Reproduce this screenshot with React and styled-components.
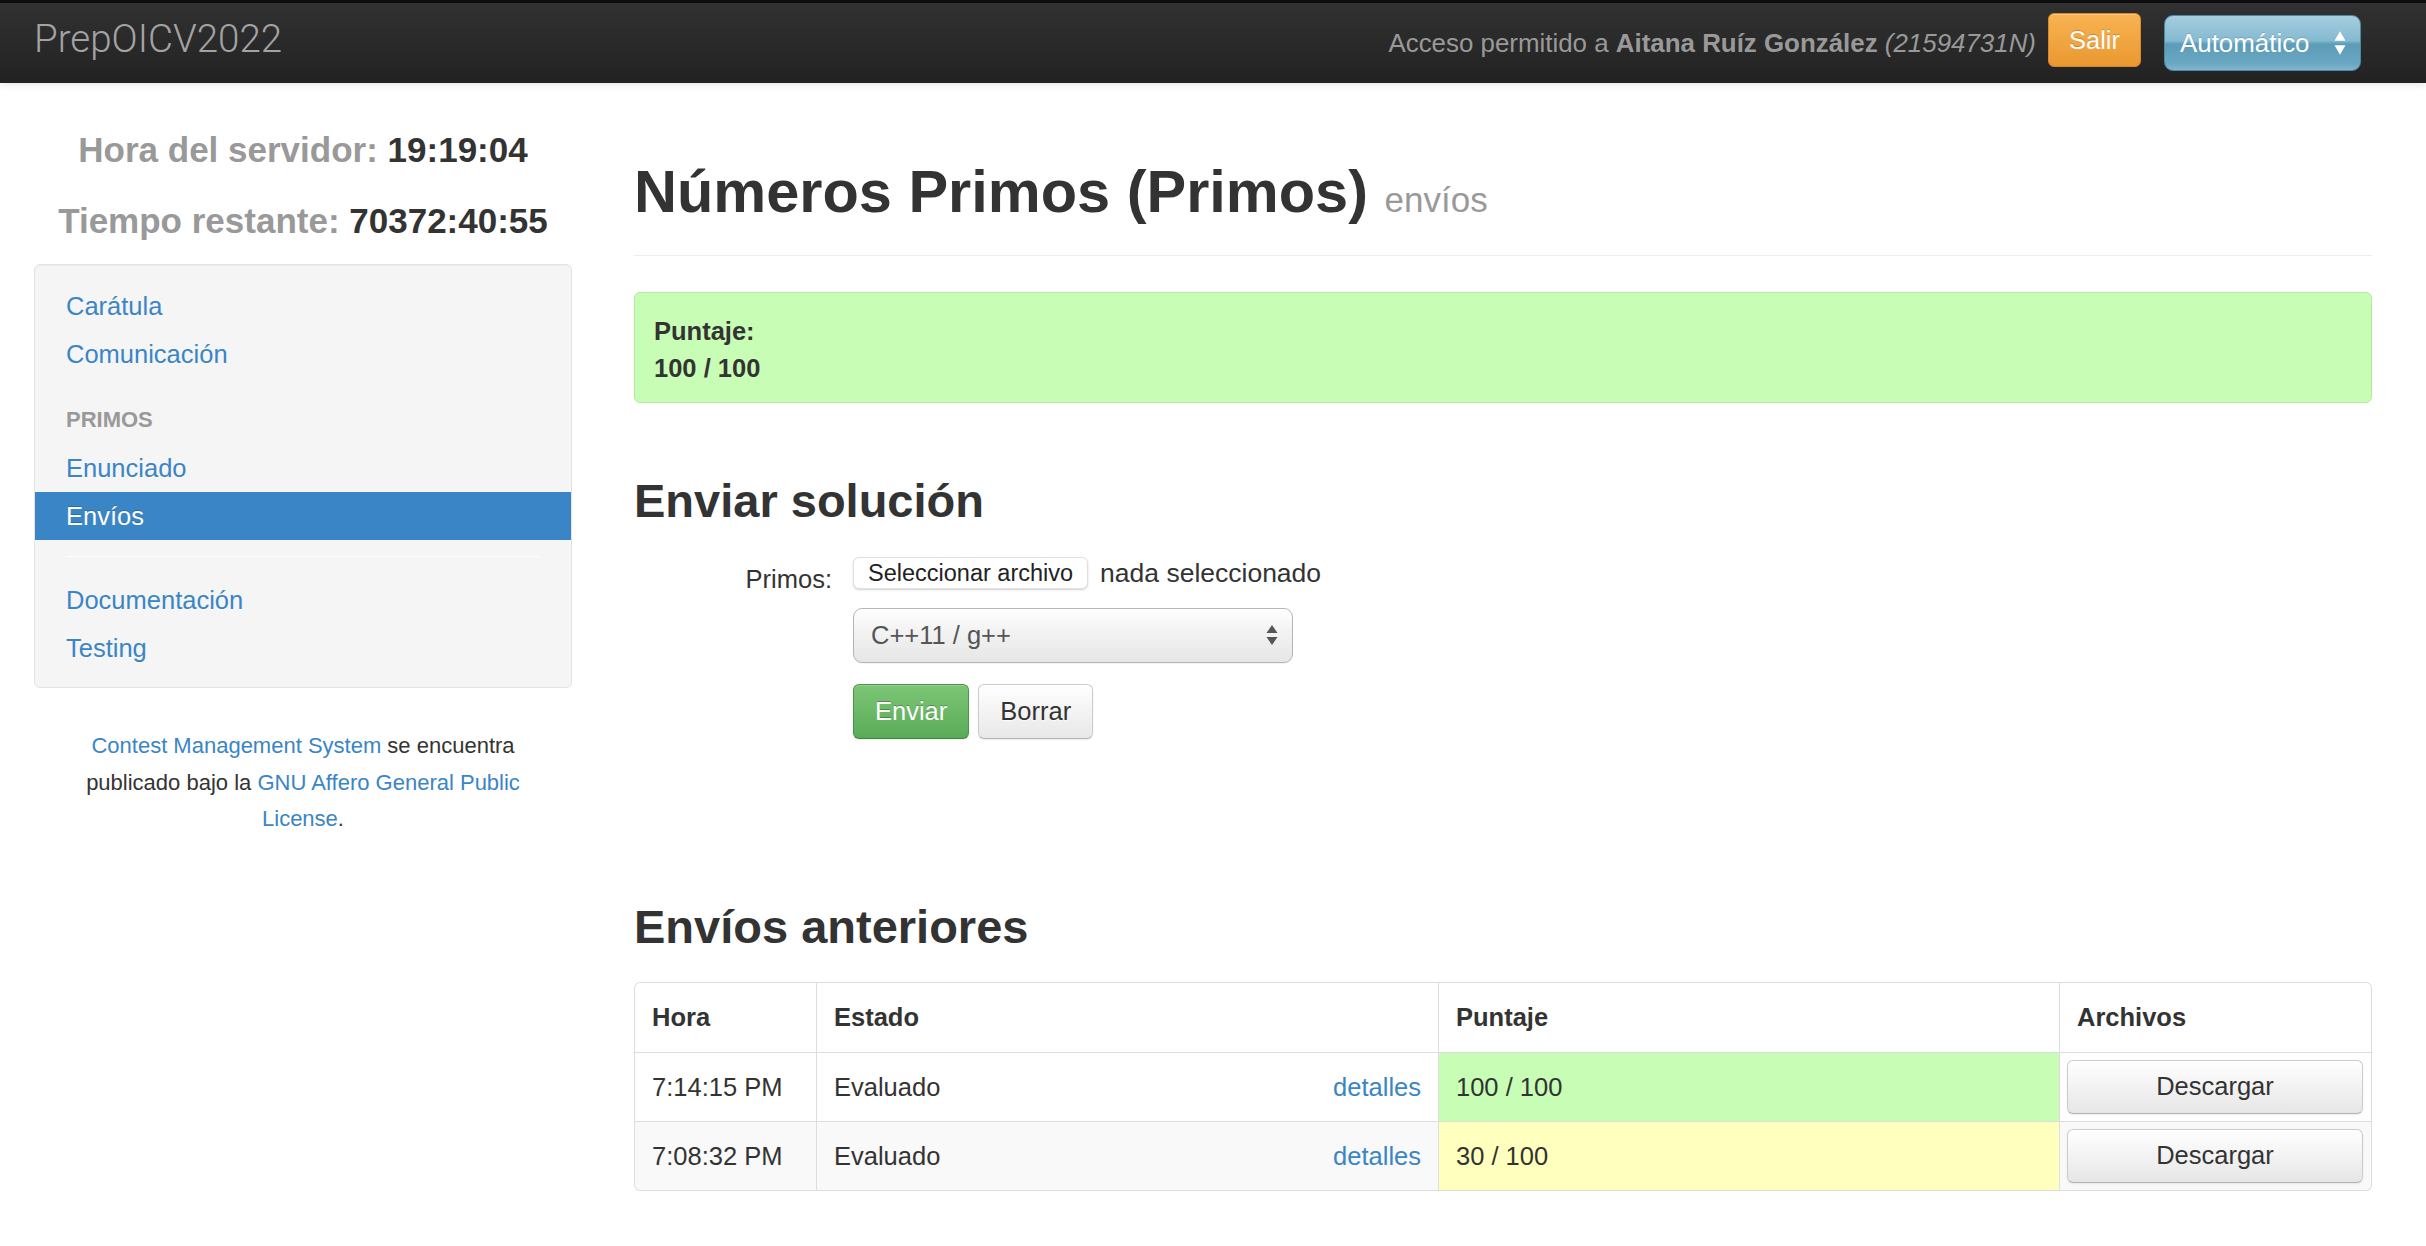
import styled, { createGlobalStyle } from "styled-components";

const GlobalStyle = createGlobalStyle`
    * { box-sizing: border-box; }
    body {
        margin: 0;
        background: #ffffff;
        font-family: "Liberation Sans", Arial, sans-serif;
        font-size: 25.5px;
        line-height: 36.5px;
        color: #333333;
    }
`

const submissions = [
    { time: "7:14:15 PM", status: "Evaluado", score: "100 / 100", full: true },
    { time: "7:08:32 PM", status: "Evaluado", score: "30 / 100", full: false },
];

function UpDown({ color, height = 22 }) {
    return (
        <svg width="12" height={height} viewBox="0 0 12 22" preserveAspectRatio="none">
            <path d="M6 1 L11.5 9 H0.5 Z" fill={color} />
            <path d="M6 21 L11.5 13 H0.5 Z" fill={color} />
        </svg>
    )
}

export default function App() {
    return (
        <>
            <GlobalStyle />
            <Navbar>
                <Brand>PrepOICV2022</Brand>
                <NavRight>
                    <UserText>
                        Acceso permitido a <b>Aitana Ruíz González</b> <i>(21594731N)</i>
                    </UserText>
                    <LogoutButton>Salir</LogoutButton>
                    <LangSelect>
                        Automático
                        <UpDown color="#ffffff" height={26} />
                    </LangSelect>
                </NavRight>
            </Navbar>

            <Page>
                <Sidebar>
                    <ClockLine><span>Hora del servidor:</span> 19:19:04</ClockLine>
                    <ClockLine><span>Tiempo restante:</span> 70372:40:55</ClockLine>
                    <NavBox>
                        <NavLink>Carátula</NavLink>
                        <NavLink>Comunicación</NavLink>
                        <NavHeader>Primos</NavHeader>
                        <NavLink>Enunciado</NavLink>
                        <NavLink $active>Envíos</NavLink>
                        <NavDivider />
                        <NavLink>Documentación</NavLink>
                        <NavLink>Testing</NavLink>
                    </NavBox>
                    <Footer>
                        <A>Contest Management System</A> se encuentra publicado bajo la <A>GNU Affero General Public License</A>.
                    </Footer>
                </Sidebar>

                <Main>
                    <PageHeader>
                        <Title>Números Primos (Primos) <small>envíos</small></Title>
                    </PageHeader>

                    <ScoreAlert>
                        <b>Puntaje:</b>
                        <br />
                        <b>100 / 100</b>
                    </ScoreAlert>

                    <SectionTitle $top={70}>Enviar solución</SectionTitle>
                    <Form>
                        <Label>Primos:</Label>
                        <Controls>
                            <FileRow>
                                <FileButton>Seleccionar archivo</FileButton>
                                <span>nada seleccionado</span>
                            </FileRow>
                            <Select>
                                C++11 / g++
                                <UpDown color="#555555" />
                            </Select>
                            <Actions>
                                <Button $variant="success">Enviar</Button>
                                <Button>Borrar</Button>
                            </Actions>
                        </Controls>
                    </Form>

                    <SectionTitle $top={160}>Envíos anteriores</SectionTitle>
                    <Table>
                        <colgroup>
                            <col style={{ width: "182px" }} />
                            <col style={{ width: "622px" }} />
                            <col style={{ width: "621px" }} />
                            <col />
                        </colgroup>
                        <thead>
                            <tr>
                                <Th>Hora</Th>
                                <Th>Estado</Th>
                                <Th>Puntaje</Th>
                                <Th>Archivos</Th>
                            </tr>
                        </thead>
                        <tbody>
                            {submissions.map((s, i) => (
                                <tr key={i}>
                                    <Td $striped={i % 2 === 1}>{s.time}</Td>
                                    <Td $striped={i % 2 === 1}>
                                        {s.status}
                                        <Details>detalles</Details>
                                    </Td>
                                    <Td $score={s.full ? "full" : "partial"}>{s.score}</Td>
                                    <FileCell $striped={i % 2 === 1}>
                                        <DownloadButton>Descargar</DownloadButton>
                                    </FileCell>
                                </tr>
                            ))}
                        </tbody>
                    </Table>
                </Main>
            </Page>
        </>
    )
}

const Navbar = styled.header`
    height: 83px;
    border-top: 3px solid #0c0c0c;
    background: linear-gradient(#313131, #222222);
    box-shadow: 0 1px 8px rgba(0, 0, 0, 0.12);
    display: flex;
    align-items: center;
    justify-content: space-between;
    padding: 0 65px 4px 34px;
`
const Brand = styled.div`
    font-family: Roboto, "Liberation Sans", sans-serif;
    font-weight: 300;
    font-size: 38.5px;
    line-height: 40px;
    color: #a3a3a3;
    margin-top: -4px;
`
const NavRight = styled.div`
    display: flex;
    align-items: center;
`
const UserText = styled.span`
    color: #999999;
    font-size: 25.9px;
    margin-right: 12px;
    margin-top: 4px;

    b {
        font-weight: bold;
    }
`
const LogoutButton = styled.button`
    height: 54px;
    padding: 0 20px;
    border: 1px solid #d8892a;
    border-radius: 6px;
    background: linear-gradient(#f8b352, #eb9830);
    color: #ffffff;
    font-family: inherit;
    font-size: 25.5px;
    text-shadow: 0 -1px 0 rgba(0, 0, 0, 0.2);
    box-shadow: inset 0 1px 0 rgba(255, 255, 255, 0.25);
    margin-top: -2px;
`
const LangSelect = styled.div`
    width: 197px;
    height: 56px;
    margin-left: 23px;
    margin-top: 4px;
    padding: 0 14px 0 15px;
    display: flex;
    align-items: center;
    justify-content: space-between;
    border: 1px solid #4a8aa6;
    border-radius: 9px;
    background: linear-gradient(#a6cde0 0%, #84bad1 46%, #5c9cb8 52%, #6aa7c2 88%, #82b6cc 100%);
    color: #ffffff;
    font-size: 25.9px;
    text-shadow: 0 -1px 0 rgba(0, 0, 0, 0.15);
`
const Page = styled.div`
    display: flex;
    gap: 62px;
    padding: 0 54px 0 34px;
`
const Sidebar = styled.aside`
    width: 538px;
    flex-shrink: 0;
    padding-top: 31px;
`
const ClockLine = styled.p`
    margin: 0;
    text-align: center;
    font-size: 35px;
    line-height: 71px;
    font-weight: bold;
    color: #333333;

    span {
        color: #999999;
    }
`
const NavBox = styled.nav`
    margin-top: 8px;
    padding: 17px 0 15px;
    background: #f5f5f5;
    border: 1px solid #e3e3e3;
    border-radius: 6px;
    box-shadow: inset 0 1px 1px rgba(0, 0, 0, 0.03);
`
const NavLink = styled.a`
    display: block;
    height: 48px;
    line-height: 48px;
    padding: 0 31px;
    font-size: 25.5px;
    color: ${p => p.$active ? "#ffffff" : "#3a85c6"};
    background: ${p => p.$active ? "#3a85c6" : "transparent"};
    text-shadow: ${p => p.$active ? "0 -1px 0 rgba(0,0,0,0.2)" : "0 1px 0 rgba(255,255,255,0.5)"};
`
const NavHeader = styled.div`
    margin-top: 18px;
    height: 48px;
    line-height: 48px;
    padding: 0 31px;
    font-size: 22px;
    font-weight: bold;
    text-transform: uppercase;
    color: #999999;
`
const NavDivider = styled.div`
    margin: 16px 32px 19px;
    height: 1px;
    background: #e5e5e5;
    border-bottom: 1px solid #ffffff;
`
const Footer = styled.p`
    margin: 40px 0 0;
    padding: 0 30px;
    text-align: center;
    font-size: 22px;
    line-height: 36.5px;
    color: #333333;
`
const A = styled.a`
    color: #3a85c6;
`
const Main = styled.main`
    flex: 1;
    min-width: 0;
    padding-top: 73px;
`
const PageHeader = styled.div`
    padding-bottom: 27px;
    border-bottom: 1px solid #eeeeee;
`
const Title = styled.h1`
    margin: 0;
    font-size: 59.5px;
    line-height: 72px;
    font-weight: bold;
    color: #333333;

    small {
        font-size: 35px;
        line-height: 1;
        font-weight: normal;
        color: #999999;
    }
`
const ScoreAlert = styled.div`
    margin-top: 36px;
    padding: 20px 19px 16px;
    background: #c7fdb5;
    border: 1px solid #b3eaa0;
    border-radius: 6px;
    color: #333333;
`
const SectionTitle = styled.h2`
    margin: ${p => p.$top}px 0 0;
    font-size: 47px;
    line-height: 56px;
    font-weight: bold;
    color: #333333;
`
const Form = styled.form`
    margin-top: 25.5px;
    display: grid;
    grid-template-columns: 198px 1fr;
    column-gap: 21px;
`
const Label = styled.label`
    text-align: right;
    padding-top: 6px;
`
const Controls = styled.div`
    display: flex;
    flex-direction: column;
    align-items: flex-start;
`
const FileRow = styled.div`
    height: 36.5px;
    display: flex;
    align-items: center;
    gap: 12px;
    font-size: 26.5px;
`
const FileButton = styled.span`
    height: 32px;
    line-height: 30px;
    padding: 0 14px;
    font-size: 23.5px;
    color: #222222;
    background: #ffffff;
    border: 1px solid #e0e0e0;
    border-radius: 6px;
    box-shadow: 0 1px 2px rgba(0, 0, 0, 0.18);
`
const Select = styled.div`
    margin-top: 16.5px;
    width: 440px;
    height: 55px;
    padding: 0 14px 0 17px;
    display: flex;
    align-items: center;
    justify-content: space-between;
    color: #555555;
    background: linear-gradient(#ffffff, #f3f3f3 40%, #e6e6e6);
    border: 1px solid #b5b5b5;
    border-radius: 9px;
    box-shadow: inset 0 1px 0 rgba(255, 255, 255, 0.8), 0 1px 1px rgba(0, 0, 0, 0.05);
`
const Actions = styled.div`
    margin-top: 21px;
    display: flex;
    gap: 9px;
`
const Button = styled.button`
    height: 55px;
    padding: 0 21px;
    font-family: inherit;
    font-size: 25.5px;
    border-radius: 6px;
    color: ${p => p.$variant === "success" ? "#ffffff" : "#333333"};
    background: ${p => p.$variant === "success" ? "linear-gradient(#7cc676, #5aab57)" : "linear-gradient(#ffffff, #e8e8e8)"};
    border: 1px solid ${p => p.$variant === "success" ? "#4b944a" : "#cccccc"};
    border-bottom-color: ${p => p.$variant === "success" ? "#3f833e" : "#b3b3b3"};
    text-shadow: ${p => p.$variant === "success" ? "0 -1px 0 rgba(0,0,0,0.25)" : "0 1px 1px rgba(255,255,255,0.75)"};
    box-shadow: inset 0 1px 0 rgba(255, 255, 255, 0.2), 0 1px 2px rgba(0, 0, 0, 0.08);
`
const Table = styled.table`
    margin-top: 27.5px;
    width: 100%;
    table-layout: fixed;
    border-collapse: separate;
    border-spacing: 0;
    border: 1px solid #dddddd;
    border-left: 0;
    border-radius: 6px;

    tr:first-child th:first-child { border-top-left-radius: 6px; }
    tr:last-child td:first-child { border-bottom-left-radius: 6px; }
    tr:last-child td:last-child { border-bottom-right-radius: 6px; }
`
const Th = styled.th`
    padding: 16px 17px;
    text-align: left;
    font-weight: bold;
    border-left: 1px solid #dddddd;
`
const Td = styled.td`
    height: 69px;
    padding: 6px 17px 5px;
    vertical-align: middle;
    border-left: 1px solid #dddddd;
    border-top: 1px solid #dddddd;
    background: ${p => p.$score === "full" ? "#c7fdb5" : p.$score === "partial" ? "#ffffbe" : p.$striped ? "#f9f9f9" : "#ffffff"};
`
const FileCell = styled(Td)`
    padding: 6px 8px 6px 7px;
`
const Details = styled.a`
    float: right;
    color: #3a85c6;
`
const DownloadButton = styled.button`
    display: block;
    width: 100%;
    height: 54px;
    font-family: inherit;
    font-size: 25.5px;
    color: #333333;
    background: linear-gradient(#ffffff, #e6e6e6);
    border: 1px solid #cccccc;
    border-bottom-color: #b3b3b3;
    border-radius: 6px;
    box-shadow: inset 0 1px 0 rgba(255, 255, 255, 0.2), 0 1px 2px rgba(0, 0, 0, 0.08);
`
